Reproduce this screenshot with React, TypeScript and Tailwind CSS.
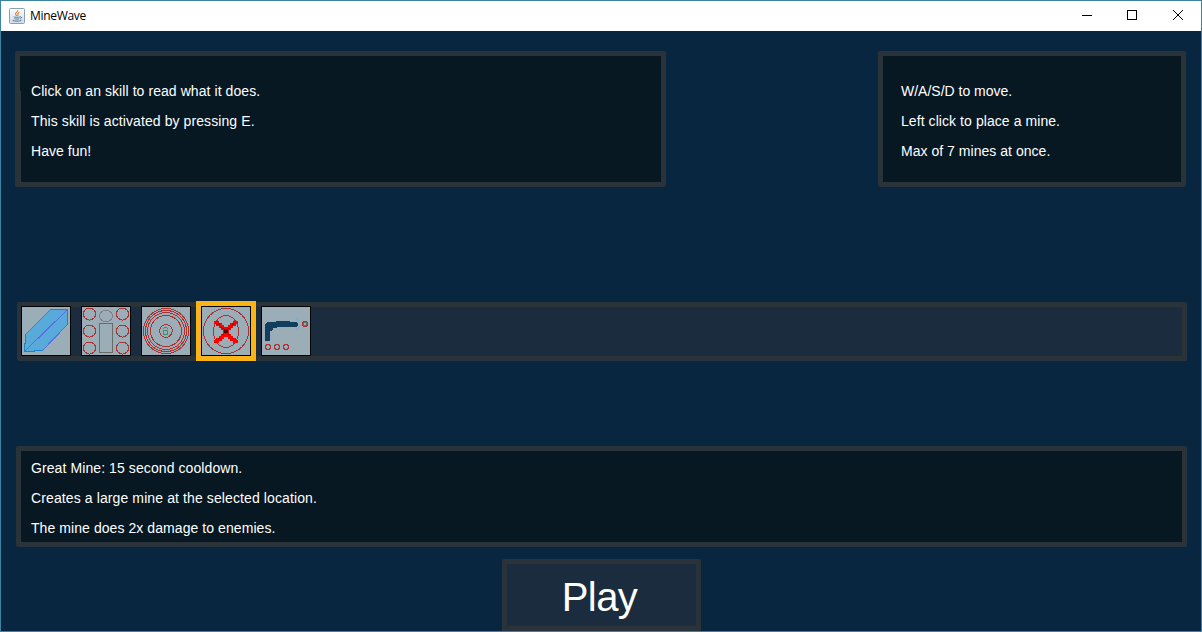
import type { ReactNode } from "react";

function Slot({ selected, children }: { selected?: boolean; children: ReactNode }) {
  return (
    <button
      className={
        "size-[60px] shrink-0 border-5 " + (selected ? "border-[#fbb418]" : "border-transparent")
      }
    >
      <svg width="50" height="50" viewBox="0 0 50 50" fill="none" shapeRendering="crispEdges" className="block">
        <rect x="0.5" y="0.5" width="49" height="49" fill="#9badb7" stroke="#000" />
        {children}
      </svg>
    </button>
  );
}

function Shard() {
  return (
    <>
      <path d="M29.5 3.5H46.5V18.5L21.5 44.5H13.5V45.5H3.5V37.5L4.5 28.5Z" fill="#58aadb" />
      <path d="M29.5 3.5L4.5 28.5M3.5 45.5L46.5 3.5M46.5 18.5L21.5 44.5" stroke="#5b6ee1" />
      <path d="M29.5 3.5H46.5V18.5M4.5 28V37.5H3.5V45.5H13.5V44.5H21.5" stroke="#1c84c6" />
    </>
  );
}

function MineField() {
  return (
    <>
      {[8, 25, 42].map((y) => (
        <g key={y} stroke="#ac3232">
          <circle cx="8.5" cy={y} r="6" />
          <circle cx="41.5" cy={y} r="6" />
        </g>
      ))}
      <ellipse cx="25" cy="10" rx="6.5" ry="5.7" stroke="#847e87" />
      <rect x="18.5" y="17.5" width="13" height="29" stroke="#696a6a" />
    </>
  );
}

function Shockwave() {
  return (
    <>
      <g stroke="#ac3232">
        <circle cx="25" cy="25" r="22.5" />
        <circle cx="25" cy="25" r="20.5" />
        <circle cx="25" cy="25" r="18.5" />
        <circle cx="25" cy="25" r="15.5" />
        <circle cx="25" cy="25" r="6.3" />
      </g>
      <path d="M22.5 24.5H26.5V28.5H22.5ZM23 21.5H26M22.5 22V23M26.5 22V23" stroke="#37946e" />
    </>
  );
}

function GreatMine() {
  return (
    <>
      <circle cx="25" cy="25" r="22.5" stroke="#ac3232" />
      <ellipse cx="25" cy="25.5" rx="12.5" ry="16" stroke="#ac3232" />
      <path
        d="M13 15h5v2h3v2h2v2h4v-2h2v-2h3v-2h5v3h-2v2h-3v2h-2v2h-2v4h2v2h2v2h3v2h2v3h-5v-2h-3v-2h-2v-2h-4v2h-2v2h-3v2h-5v-3h2v-2h3v-2h2v-2h2v-4h-2v-2h-2v-2h-3v-2h-2z"
        fill="#f00"
      />
      <path d="M23 23h4v4h-4z" fill="#5a0000" />
      <path d="M15 18h2v1h-2zM17 17h2v2h-2zM19 21h2v1h-2zM29 21h2v1h-2zM31 17h2v2h-2zM21 22h2v1h-2zM27 22h2v1h-2zM21 28h2v1h-2zM27 28h2v1h-2zM17 32h2v1h-2zM31 32h2v1h-2z" fill="#b00" />
    </>
  );
}

function Cannon() {
  return (
    <>
      <path d="M4 18L6 16H14L18 14.5H27L30 16H35L37 18V19L35 21H16V22L12 22.5V24L9 25V35H4Z" fill="#123f5e" />
      <path d="M35 12L39.5 16.5M35 24L39.5 19.5" stroke="#5fb3dc" />
      <g stroke="#ac3232" strokeWidth="1.3">
        <circle cx="7" cy="41" r="2.6" />
        <circle cx="16" cy="41" r="2.6" />
        <circle cx="25" cy="41" r="2.6" />
        <circle cx="44" cy="18" r="2.6" />
      </g>
      <circle cx="44" cy="18" r="1.5" stroke="#696a6a" />
    </>
  );
}

function JavaIcon() {
  return (
    <svg width="16" height="16" viewBox="0 0 16 16" fill="none" className="-mt-px">
      <defs>
        <linearGradient id="tile" x1="0" y1="0" x2="0" y2="1">
          <stop offset="0" stopColor="#fdfdfd" />
          <stop offset="1" stopColor="#cfdce6" />
        </linearGradient>
      </defs>
      <rect x="0.5" y="0.5" width="15" height="15" rx="1" fill="url(#tile)" stroke="#8ba0b3" />
      <path d="M8.8 2C9.4 3.8 6.2 4.4 6.5 6c.1.7.8 1.2 1.1 1.9M10.3 4.3C8.4 5 8.5 6 9 6.7c.3.5 0 1-.6 1.5" stroke="#e8812d" strokeWidth="1.1" />
      <path d="M4.8 8.9c1.5.6 4.5.6 6 0M5.4 10.7c1.4.5 3.8.5 4.9 0M11 8.9c2-.5 2 1.4.2 2M3.5 12.2c1.5 1.2 7.5 1.2 9 0" stroke="#527b9e" />
    </svg>
  );
}

function TitleBar() {
  return (
    <header className="flex h-[30px] shrink-0 items-center bg-white pl-2">
      <JavaIcon />
      <span className="ml-[5px] font-['Open_Sans','Noto_Sans',sans-serif] text-[12px] leading-[16px] tracking-[-0.3px] text-black">
        MineWave
      </span>
      <div className="ml-auto flex h-full">
        {["M6 14.5H16", "M5.5 9.5H14.5V18.5H5.5Z", "M5 9L15 19M15 9L5 19"].map((d, i) => (
          <button key={d} className="flex w-[46px] justify-center">
            <svg width="20" height="30" fill="none" stroke="#000" shapeRendering={i < 2 ? "crispEdges" : "auto"}>
              <path d={d} />
            </svg>
          </button>
        ))}
      </div>
    </header>
  );
}

const panel = "rounded-[2px] border-5 border-[#2a323a] bg-[#071823]";
const copy = "text-[14px] leading-[30px] whitespace-nowrap text-white";

export default function App() {
  return (
    <div className="flex h-[632px] w-[1202px] flex-col overflow-hidden border border-[#3b83a3] bg-[#082640] font-['Liberation_Sans',Arial,sans-serif]">
      <TitleBar />
      <main className="flex min-h-0 grow flex-col pt-5">
        <div className="flex justify-between pr-[15px] pl-[14px]">
          <section className={`${panel} ${copy} relative h-[136px] w-[651px] pt-5 pl-[11px]`}>
            <p className="tracking-[0.07px]">Click on an skill to read what it does.</p>
            <p className="tracking-[0.09px]">This skill is activated by pressing E.</p>
            <p className="tracking-[0.03px]">Have fun!</p>
            <span className="absolute top-[35px] bottom-0 left-0 w-px bg-[#2a323a]" />
          </section>
          <section className={`${panel} ${copy} h-[136px] w-[308px] pt-5 pl-[18px]`}>
            <p>W/A/S/D to move.</p>
            <p className="tracking-[0.07px]">Left click to place a mine.</p>
            <p className="tracking-[0.03px]">Max of 7 mines at once.</p>
          </section>
        </div>

        <div className="mt-[115px] mr-[14px] ml-4 flex h-[59px] items-center rounded-[2px] border-5 border-[#2a323a] bg-[#1a2c3d]">
          <div className="-mt-px -ml-[6px] flex">
            <Slot><Shard /></Slot>
            <Slot><MineField /></Slot>
            <Slot><Shockwave /></Slot>
            <Slot selected><GreatMine /></Slot>
            <Slot><Cannon /></Slot>
          </div>
        </div>

        <section className={`${panel} ${copy} mt-[85px] mr-[14px] ml-[15px] h-[101px] pt-[2px] pl-[10px]`}>
          <p className="tracking-[0.09px]">Great Mine: 15 second cooldown.</p>
          <p className="tracking-[0.11px]">Creates a large mine at the selected location.</p>
          <p className="tracking-[0.07px]">The mine does 2x damage to enemies.</p>
        </section>

        <button className="mt-3 ml-[501px] flex h-[72px] w-[199px] shrink-0 justify-center rounded-t-[2px] border-5 border-[#2a323a] bg-[#1a2c3d] pt-[10px] pr-1 text-[40px] leading-[46px] tracking-[-0.6px] text-white">
          Play
        </button>
      </main>
    </div>
  );
}
